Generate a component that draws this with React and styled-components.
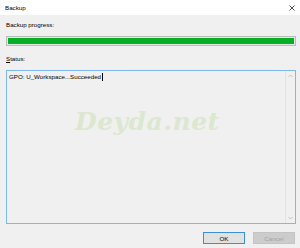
import styled, { createGlobalStyle } from 'styled-components';

const GlobalStyle = createGlobalStyle`
  html, body {
    margin: 0;
    padding: 0;
    background: #f0f0f0;
  }
  * {
    box-sizing: border-box;
  }
`;

const Dialog = styled.div`
  width: 300px;
  height: 248px;
  display: flex;
  flex-direction: column;
  background: #f0f0f0;
  font-family: 'Liberation Sans', Arial, sans-serif;
  font-size: 6.2px;
  color: #000;
  overflow: hidden;
`;

const TitleBar = styled.div`
  height: 15px;
  flex-shrink: 0;
  background: #fff;
  display: flex;
  align-items: center;
  justify-content: space-between;
  padding: 0 5px 0 5px;
`;

const CloseIcon = styled.svg`
  width: 6px;
  height: 6px;
`;

const Body = styled.div`
  flex: 1;
  display: flex;
  flex-direction: column;
  padding: 6px 4px 4px 6px;
`;

const Label = styled.div`
  line-height: 8px;
  height: 8px;
  margin-bottom: ${({ gap }) => gap}px;
  margin-top: ${({ top }) => top || 0}px;
`;

const Progress = styled.div`
  height: 10px;
  border: 1px solid #bcbcbc;
  background: #e6e6e6;
  padding: 1px;
`;

const ProgressFill = styled.div`
  height: 100%;
  background: #06b025;
`;

const TextBox = styled.div`
  position: relative;
  height: 154px;
  border: 1px solid #7db8ef;
  display: flex;
`;

const TextArea = styled.div`
  flex: 1;
  padding: 2px 2px;
  line-height: 8px;
  display: flex;
  align-items: flex-start;
`;

const Caret = styled.span`
  display: inline-block;
  width: 1px;
  height: 8px;
  background: #000;
  margin-left: 1px;
`;

const ScrollBar = styled.div`
  width: 10px;
  border-left: 1px solid #e3e3e3;
  display: flex;
  flex-direction: column;
  justify-content: space-between;
  align-items: center;
  padding: 3px 0;
`;

const Arrow = styled.svg`
  width: 5px;
  height: 4px;
`;

const Watermark = styled.div`
  position: absolute;
  left: 68px;
  top: 36px;
  font-family: 'DejaVu Serif', serif;
  font-style: italic;
  font-weight: bold;
  font-size: 25px;
  letter-spacing: 0.5px;
  color: #dbe8cf;
  pointer-events: none;
`;

const Buttons = styled.div`
  margin-top: 8px;
  display: flex;
  justify-content: flex-end;
  gap: 8px;
  padding-right: 1px;
`;

const Button = styled.button`
  width: 42px;
  height: 12px;
  padding: 0;
  font-family: 'Liberation Sans', Arial, sans-serif;
  font-size: 6.2px;
  border: 1px solid ${({ primary }) => (primary ? '#3d8ee0' : '#c4c4c4')};
  background: ${({ primary }) => (primary ? '#e1e1e1' : '#cccccc')};
  color: ${({ primary }) => (primary ? '#000' : '#a3a3a3')};
`;

const App = () => (
  <Dialog>
    <GlobalStyle />
    <TitleBar>
      <span>Backup</span>
      <CloseIcon viewBox="0 0 6 6">
        <path d="M0.5 0.5 L5.5 5.5 M5.5 0.5 L0.5 5.5" stroke="#222" strokeWidth="0.8" />
      </CloseIcon>
    </TitleBar>
    <Body>
      <Label gap={7}>Backup progress:</Label>
      <Progress>
        <ProgressFill />
      </Progress>
      <Label top={9} gap={7}>
        <u>S</u>tatus:
      </Label>
      <TextBox>
        <TextArea>
          GPO: U_Workspace...Succeeded
          <Caret />
        </TextArea>
        <ScrollBar>
          <Arrow viewBox="0 0 5 4">
            <path d="M0.5 3 L2.5 1 L4.5 3" fill="none" stroke="#b8b8b8" strokeWidth="0.8" />
          </Arrow>
          <Arrow viewBox="0 0 5 4">
            <path d="M0.5 1 L2.5 3 L4.5 1" fill="none" stroke="#b8b8b8" strokeWidth="0.8" />
          </Arrow>
        </ScrollBar>
        <Watermark>Deyda.net</Watermark>
      </TextBox>
      <Buttons>
        <Button primary>OK</Button>
        <Button disabled>Cancel</Button>
      </Buttons>
    </Body>
  </Dialog>
);

export default App;
